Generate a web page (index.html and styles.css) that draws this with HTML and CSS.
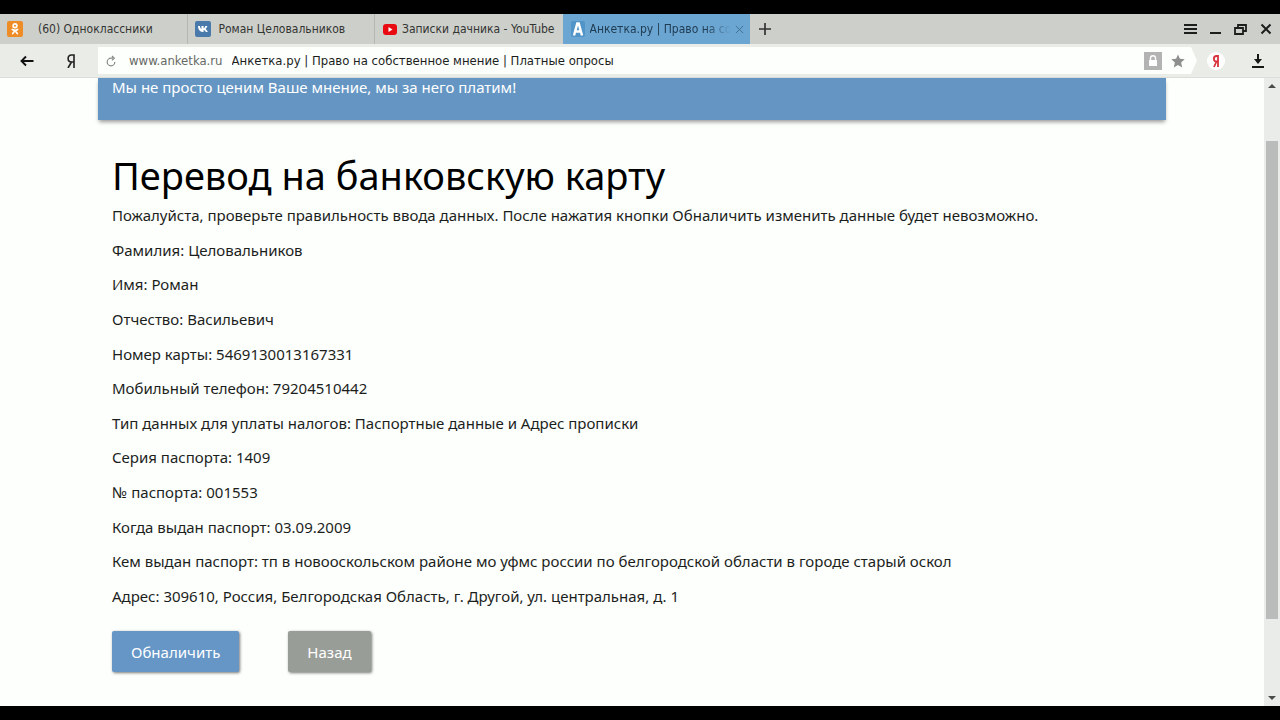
FILE: index.html
```
<!DOCTYPE html>
<html lang="ru">
<head>
<meta charset="utf-8">
<meta name="viewport" content="width=device-width, initial-scale=1">
<title>Анкетка.ру | Право на собственное мнение | Платные опросы</title>
<link rel="stylesheet" href="styles.css">
</head>
<body>
<div class="browser">
  <header class="tabbar">
    <nav class="tabs" aria-label="Вкладки">
      <a class="tab tab-ok" href="#">
        <svg class="favicon" viewBox="0 0 16 16" aria-hidden="true"><rect width="16" height="16" rx="2" fill="#ee8c27"/><g fill="none" stroke="#fff" stroke-width="1.7" stroke-linecap="round"><circle cx="8" cy="4.700" r="1.900"/><path d="M5.400 8.500c1.700 1.200 3.500 1.200 5.200 0M8 9.600l-2.300 3M8 9.600l2.300 3"/></g></svg>
        <span class="tab-title">(60) Одноклассники</span>
      </a>
      <a class="tab tab-vk" href="#">
        <svg class="favicon" viewBox="0 0 16 16" aria-hidden="true"><rect width="16" height="16" rx="2" fill="#4a7aab"/><path fill="#fff" d="M3 5h1.900c.3 1.700.9 2.900 1.500 3.100V5h2.200v2.300C9.400 7.100 10 6 10.300 5h2c-.3 1.300-1.100 2.300-1.700 2.900.8.600 1.700 1.500 2.200 3h-2.100c-.4-1-1.100-1.700-2.100-1.800v1.800h-.8C5 10.900 3.100 8.600 3 5z"/></svg>
        <span class="tab-title">Роман Целовальников</span>
      </a>
      <a class="tab tab-yt" href="#">
        <svg class="favicon" viewBox="0 0 16 16" aria-hidden="true"><rect x="1" y="3" width="14" height="11" rx="3" fill="#e80a10"/><path fill="#fff" d="M6.500 6v5l4-2.500z"/></svg>
        <span class="tab-title">Записки дачника - YouTube</span>
      </a>
      <a class="tab tab-active" href="#" aria-current="page">
        <svg class="favicon" viewBox="0 0 16 16" aria-hidden="true"><rect x="1" width="14" height="16" rx="2" fill="#5094c8"/><path fill="none" stroke="#fff" stroke-width="2.500" d="M4 14.500L7.300 2.500h1.400l3.300 12M5.500 10.500h5"/></svg>
        <span class="tab-title">Анкетка.ру | Право на со</span>
        <svg class="tab-close" viewBox="0 0 10 10" aria-hidden="true"><path d="M1 1l8 8M9 1L1 9" fill="none" stroke="#416d8e"/></svg>
      </a>
    </nav>
    <button class="icon-button new-tab" aria-label="Новая вкладка"><svg viewBox="0 0 12 12" width="12" height="12"><path d="M6 0v12M0 6h12" stroke="#333" stroke-width="1.700"/></svg></button>
    <div class="window-controls">
      <button class="icon-button" aria-label="Меню"><svg viewBox="0 0 14 14" width="14" height="14"><path d="M0 3h13M0 7h13M0 11h13" stroke="#1c1e1c" stroke-width="2"/></svg></button>
      <button class="icon-button" aria-label="Свернуть"><svg viewBox="0 0 14 14" width="14" height="14"><path d="M1 11h11" stroke="#1c1e1c" stroke-width="2"/></svg></button>
      <button class="icon-button" aria-label="Развернуть"><svg viewBox="0 0 14 14" width="14" height="14"><path d="M1 6h8v6H1zM4 6V3h8v6H9" fill="none" stroke="#1c1e1c" stroke-width="1.800"/></svg></button>
      <button class="icon-button" aria-label="Закрыть"><svg viewBox="0 0 14 14" width="14" height="14"><path d="M2.500 2.500l9 9M11.500 2.500l-9 9" stroke="#1c1e1c" stroke-width="2"/></svg></button>
    </div>
  </header>

  <div class="toolbar">
    <button class="icon-button back" aria-label="Назад по истории"><svg viewBox="0 0 14 12" width="14" height="12"><path d="M13.500 6H1.500M6 1.500L1.500 6 6 10.500" fill="none" stroke="#111" stroke-width="1.900"/></svg></button>
    <button class="icon-button yandex" aria-label="Яндекс"><svg viewBox="0 0 10 14" width="10" height="14"><path d="M8 14V1H5.500C1 1 1 8 5.500 8H8M5.500 8L2 14" fill="none" stroke="#222" stroke-width="1.600"/></svg></button>
    <div class="address">
      <button class="icon-button reload" aria-label="Обновить"><svg viewBox="0 0 12 12" width="12" height="12"><path d="M8 3.200H6A3.800 3.800 0 1 0 9.800 7M7 1l2.300 2.200L7 5.400" fill="none" stroke="#888" stroke-width="1.200"/></svg></button>
      <span class="host">www.anketka.ru</span>
      <span class="page-title">Анкетка.ру | Право на собственное мнение | Платные опросы</span>
      <button class="icon-button lock" aria-label="Соединение"><svg viewBox="0 0 18 18" width="18" height="18"><rect width="18" height="18" fill="#b2b3b2"/><path d="M6.500 8V6c0-3 5-3 5 0v2" fill="none" stroke="#fff" stroke-width="1.400"/><rect x="5" y="8" width="8" height="6" fill="#fff"/></svg></button>
      <button class="icon-button star" aria-label="В закладки"><svg viewBox="0 0 14 14" width="14" height="14"><path fill="#8d8e8d" d="M7 .5l1.900 4.300 4.800.5-3.600 3.200 1.100 4.900L7 10.900l-4.200 2.500 1.100-4.900L.3 5.300l4.800-.5z"/></svg></button>
    </div>
    <button class="icon-button ya-badge" aria-label="Сервисы Яндекса"><svg viewBox="0 0 18 18" width="18" height="18"><circle cx="9" cy="9" r="9" fill="#fff"/><path d="M11 15V4H9.500C6 4 6 9.500 9.500 9.500H11M9.500 9.500L7 15" fill="none" stroke="#d8323c" stroke-width="1.800"/></svg></button>
    <button class="icon-button download" aria-label="Загрузки"><svg viewBox="0 0 12 14" width="12" height="14"><path d="M6 0v7M0 13h12" stroke="#161816" stroke-width="2"/><path d="M2 5h8L6 10z" fill="#161816"/></svg></button>
  </div>

  <div class="viewport">
    <main class="page">
      <div class="banner">Мы не просто ценим Ваше мнение, мы за него платим!</div>
      <section class="content">
        <h1>Перевод на банковскую карту</h1>
        <div class="details">
          <p>Пожалуйста, проверьте правильность ввода данных. После нажатия кнопки Обналичить изменить данные будет невозможно.</p>
          <p>Фамилия: Целовальников</p>
          <p>Имя: Роман</p>
          <p>Отчество: Васильевич</p>
          <p>Номер карты: 5469130013167331</p>
          <p>Мобильный телефон: 79204510442</p>
          <p>Тип данных для уплаты налогов: Паспортные данные и Адрес прописки</p>
          <p>Серия паспорта: 1409</p>
          <p>№ паспорта: 001553</p>
          <p>Когда выдан паспорт: 03.09.2009</p>
          <p>Кем выдан паспорт: тп в новооскольском районе мо уфмс россии по белгородской области в городе старый оскол</p>
          <p>Адрес: 309610, Россия, Белгородская Область, г. Другой, ул. центральная, д. 1</p>
        </div>
        <div class="actions">
          <button class="button button-primary">Обналичить</button>
          <button class="button button-muted">Назад</button>
        </div>
      </section>
    </main>
    <div class="scrollbar" aria-hidden="true">
      <svg viewBox="0 0 8 4" width="8" height="4"><path d="M0 4l4-4 4 4z" fill="#4a4c4a"/></svg>
      <div class="track"><div class="thumb"></div></div>
      <svg viewBox="0 0 8 4" width="8" height="4"><path d="M0 0l4 4 4-4z" fill="#4a4c4a"/></svg>
    </div>
  </div>
</div>
</body>
</html>
```
FILE: styles.css
```
* {
  box-sizing: border-box;
}

body {
  margin: 0;
  background: #000;
  color: #1c1e1c;
  font-family: "Noto Sans", sans-serif;
}

.browser {
  display: flex;
  flex-direction: column;
  min-height: 100vh;
  padding: 14px 0;
}

.icon-button {
  display: flex;
  flex: none;
  align-items: center;
  justify-content: center;
  padding: 0;
  border: 0;
  background: none;
}

.tabbar {
  display: flex;
  height: 30px;
  background: #cdcfca;
  font-family: "DejaVu Sans Condensed", "DejaVu Sans", sans-serif;
  font-size: 12px;
}

.tabs {
  display: grid;
  flex: 0 1 750px;
  grid-template-columns: repeat(4, minmax(0, 1fr));
  min-width: 0;
}

.tab {
  display: flex;
  align-items: center;
  gap: 4px;
  min-width: 0;
  padding: 0 7px;
  border-right: 1px solid #b5b7b3;
  color: #333533;
  text-decoration: none;
}

.tab-ok {
  gap: 15px;
}

.tab-vk {
  gap: 8px;
}

.tab-yt {
  border-right: 0;
}

.tab-active {
  border-right: 0;
  background: #6ba6d2;
  color: #203c52;
}

.favicon {
  flex: none;
  width: 16px;
  height: 16px;
}

.tab-title {
  flex: 1;
  white-space: nowrap;
}

.tab-active .tab-title {
  mask-image: linear-gradient(to right, #000 82%, transparent);
}

.tab-close {
  flex: none;
  width: 9px;
  height: 9px;
}

.new-tab {
  width: 30px;
}

.window-controls {
  display: flex;
  gap: 11px;
  margin-left: auto;
  padding-right: 7px;
}

.toolbar {
  display: flex;
  align-items: center;
  height: 34px;
  padding-right: 16px;
  background: #eaece8;
  border-bottom: 1px solid #dcdedb;
}

.back {
  margin-left: 20px;
}

.yandex {
  margin: 0 22px 0 32px;
}

.address {
  display: flex;
  flex: 1;
  align-items: center;
  height: 27px;
  min-width: 0;
  padding: 0 12px 0 7px;
  background: #fdfffc;
  clip-path: polygon(0 0, calc(100% - 6px) 0, 100% 50%, calc(100% - 6px) 100%, 0 100%);
  font-family: "DejaVu Sans Condensed", "DejaVu Sans", sans-serif;
  font-size: 13px;
  white-space: nowrap;
}

.host {
  margin: 0 9px 0 12px;
  color: #666866;
}

.page-title {
  flex: 1;
  overflow: hidden;
}

.lock {
  margin-right: 9px;
}

.ya-badge {
  margin: 0 27px 0 10px;
}

.viewport {
  display: flex;
  flex: 1;
  background: #fcfffc;
}

.page {
  display: flex;
  flex: 1;
  flex-direction: column;
  max-width: 1068px;
  min-width: 0;
  margin: 0 auto;
}

.banner {
  height: 42px;
  padding-left: 14px;
  background: #6596c3;
  box-shadow: 0 3px 4px -1px #999;
  color: #fff;
  font-size: 15px;
  line-height: 18px;
}

.content {
  display: flex;
  flex: 1;
  flex-direction: column;
  padding: 27px 14px 34px;
}

h1 {
  margin: 0 0 2px;
  color: #000;
  font-size: 38px;
  font-weight: 400;
  line-height: 56px;
}

.details {
  display: flex;
  flex: 1;
  flex-direction: column;
  justify-content: space-between;
  font-size: 15px;
  line-height: 20px;
}

.details p {
  margin: 0;
}

.actions {
  display: flex;
  gap: 49px;
  margin-top: 25px;
}

.button {
  height: 41px;
  padding: 0 19px;
  border: 0;
  border-radius: 2px;
  box-shadow: 1px 1px 3px #777;
  color: #fff;
  font-family: inherit;
  font-size: 15px;
}

.button-primary {
  background: #6596c6;
}

.button-muted {
  background: #999d98;
}

.scrollbar {
  display: flex;
  flex: none;
  flex-direction: column;
  align-items: center;
  width: 16px;
  padding: 6px 0;
  background: #eaece9;
}

.track {
  flex: 1;
  width: 12px;
  padding: 53px 0 77px;
}

.thumb {
  height: 100%;
  background: #b9bcba;
}
```
